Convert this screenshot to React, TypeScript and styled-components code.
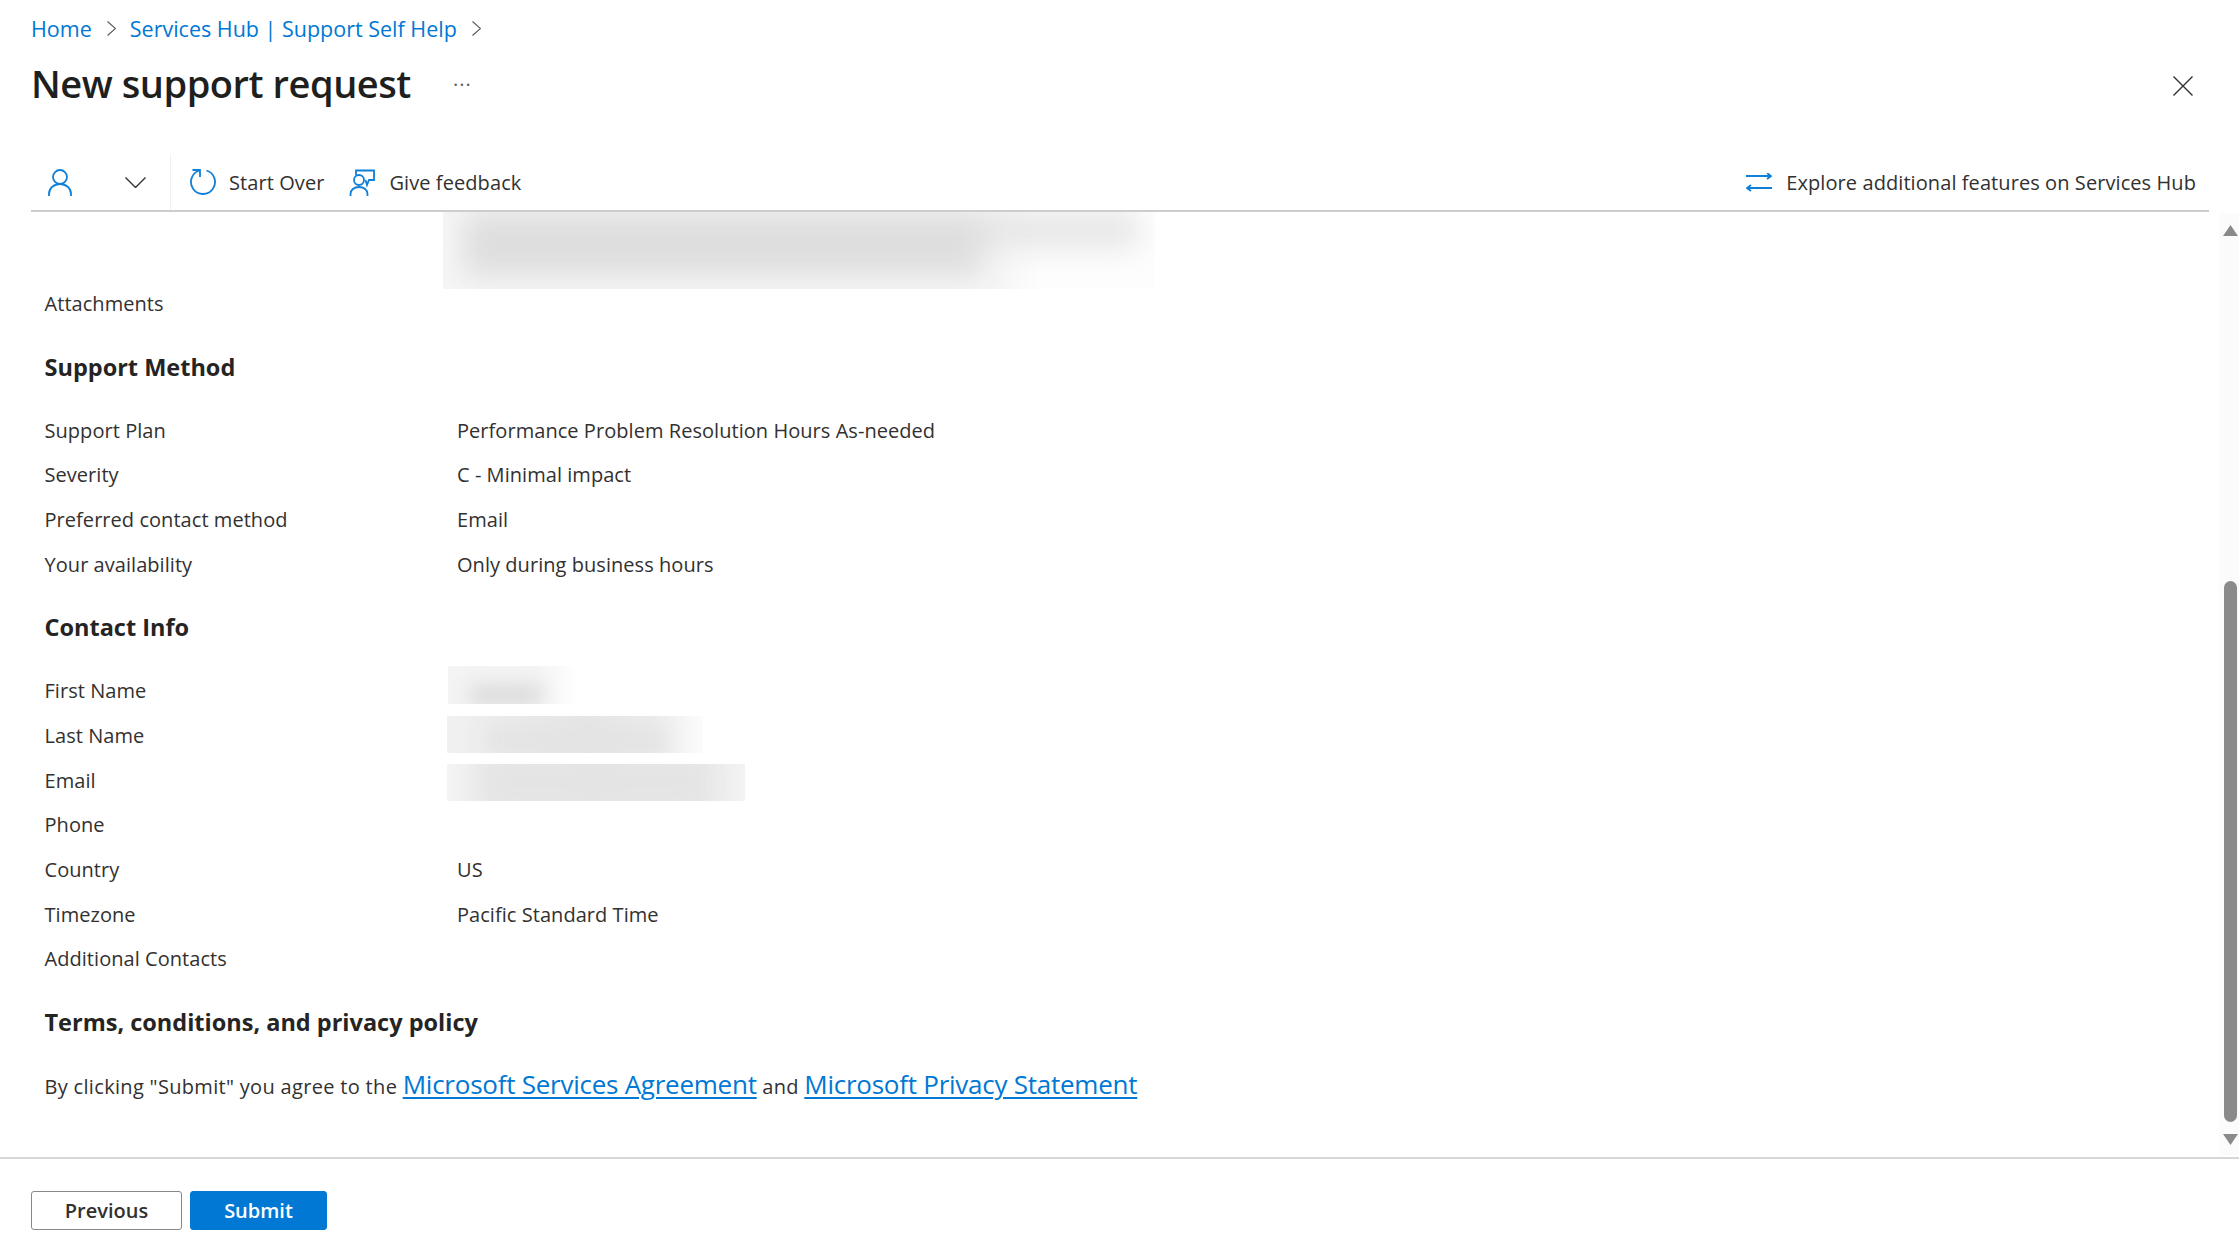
import React from "react";
import styled, { createGlobalStyle } from "styled-components";

const Global = createGlobalStyle`
  html, body { margin: 0; padding: 0; height: 100%; background: #fff; }
  body { font-family: "Open Sans", "Noto Sans", "Liberation Sans", sans-serif; color: #323130; overflow: hidden; }
  * { box-sizing: border-box; }
`;

const Page = styled.div`
  width: 2239px; height: 1240px; display: flex; flex-direction: column; overflow: hidden;
`;
const Breadcrumbs = styled.nav`
  display: flex; align-items: center; height: 46px; padding: 11px 0 0 31px; font-size: 21.5px;
`;
const Crumb = styled.a`
  color: #0078d4; text-decoration: none;
`;
const CrumbSep = styled.svg`
  width: 9px; height: 15px; margin: 0 14px 0 15px; fill: none; stroke: #605e5c; stroke-width: 1.2;
`;
const TitleRow = styled.div`
  display: flex; align-items: center; height: 44px; margin-top: 15px; padding: 0 46px 0 31px;
`;
const Title = styled.h1`
  margin: 0; font-size: 38px; font-weight: 600; color: #201f1e; letter-spacing: -0.45px; line-height: 44px;
`;
const More = styled.span`
  margin-left: 42px; font-size: 20px; line-height: 20px; color: #605e5c; letter-spacing: 1px; transform: translateY(2px);
`;
const Close = styled.svg`
  margin: 5px 0 0 auto; width: 20px; height: 20px; stroke: #323130; stroke-width: 1.4; fill: none;
`;
const Toolbar = styled.div`
  display: flex; align-items: center; height: 62px; margin: 45px 30px 0 31px; padding: 4px 13px 0 0;
  border-bottom: 2px solid #cdcdcd; font-size: 20px; letter-spacing: 0.08px;
`;
const UserGroup = styled.div`
  display: flex; align-items: center; width: 140px; height: 100%; padding-left: 17px; border-right: 1px solid #f1f1f1;
`;
const ToolIcon = styled.svg`
  flex: none; fill: none; stroke: #0f7fd8; stroke-width: 1.8;
`;
const Chevron = styled.svg`
  flex: none; margin-left: 53px; width: 21px; height: 11px; stroke: #323130; stroke-width: 1.4; fill: none;
`;
const ToolButton = styled.div<{ $gap: number; $left: number }>`
  display: flex; align-items: center; gap: ${(p) => p.$gap}px; margin-left: ${(p) => p.$left}px; white-space: nowrap;
`;
const Spring = styled.div`
  flex: 1;
`;
const Body = styled.div`
  flex: 1; min-height: 0; display: flex; overflow: hidden;
`;
const Content = styled.main`
  flex: 1; min-width: 0; padding: 0 0 0 44.5px; font-size: 20px; letter-spacing: 0.05px;
`;
const Redacted = styled.div<{ $w: number; $h: number; $left: number; $shift?: number; $base: string; $fill: string }>`
  position: relative; overflow: hidden; flex: none;
  width: ${(p) => p.$w}px; height: ${(p) => p.$h}px;
  margin-left: ${(p) => p.$left}px; margin-top: ${(p) => p.$shift ?? 0}px;
  background: ${(p) => p.$base};
  &::before {
    content: ""; position: absolute; inset: 0;
    background: ${(p) => p.$fill};
    filter: blur(10px);
  }
`;
const TopRedacted = styled(Redacted)`
  margin-bottom: -8px;
  &::before { filter: blur(14px); }
`;
const FieldRow = styled.div`
  display: grid; grid-template-columns: 412.500px 1fr; align-items: center; height: 44.7px; white-space: nowrap;
`;
const Section = styled.h2`
  margin: 0; height: 82px; display: flex; align-items: center; font-size: 23.5px; font-weight: 700; color: #252423; letter-spacing: 0;
`;
const Agreement = styled.p`
  margin: 0; display: flex; align-items: baseline; height: 44px; padding-top: 3px; white-space: pre; letter-spacing: 0.32px;
`;
const LegalLink = styled.a`
  color: #0078d4; text-decoration: underline; text-decoration-thickness: 2px; text-underline-offset: 3px; font-size: 26px; letter-spacing: -0.25px;
`;
const ScrollRail = styled.aside`
  position: relative; flex: none; width: 20px; margin: 1px 0 2px; background: #fbfbfb;
`;
const RailArrow = styled.svg<{ $top: number }>`
  position: absolute; left: 4px; top: ${(p) => p.$top}px; width: 15px; height: 11px; fill: #8a8a8a;
`;
const Thumb = styled.div`
  position: absolute; left: 5px; top: 368px; width: 13px; height: 541px; border-radius: 7px; background: #8a8a8a;
`;
const Footer = styled.footer`
  flex: none; height: 83px; border-top: 2px solid #d6d6d6; display: flex; gap: 8px; padding: 32px 0 0 31px;
`;
const Button = styled.button<{ $primary?: boolean }>`
  width: ${(p) => (p.$primary ? 137 : 151)}px; height: 39px; border-radius: 3px; padding: 0;
  font: 600 20px "Open Sans", sans-serif; letter-spacing: 0;
  background: ${(p) => (p.$primary ? "#0078d4" : "#fff")};
  color: ${(p) => (p.$primary ? "#fff" : "#323130")};
  border: ${(p) => (p.$primary ? "1px solid #0078d4" : "1.5px solid #8a8886")};
`;

const Field = ({ label, value, children }: { label: string; value?: string; children?: React.ReactNode }) => (
  <FieldRow>
    <span>{label}</span>
    {children ?? <span>{value}</span>}
  </FieldRow>
);

const bar = (x: number, y: number, w: number, h: number, c: string) =>
  `linear-gradient(${c}, ${c}) ${x}px ${y}px / ${w}px ${h}px no-repeat`;

export default function App() {
  return (
    <Page>
      <Global />
      <Breadcrumbs>
        <Crumb>Home</Crumb>
        <CrumbSep viewBox="0 0 9 15"><path d="M0.5 0.5l8 7-8 7" /></CrumbSep>
        <Crumb>Services Hub | Support Self Help</Crumb>
        <CrumbSep viewBox="0 0 9 15"><path d="M0.5 0.5l8 7-8 7" /></CrumbSep>
      </Breadcrumbs>
      <TitleRow>
        <Title>New support request</Title>
        <More>···</More>
        <Close viewBox="0 0 20 20"><path d="M0.5 0.5l19 19M19.5 0.5l-19 19" /></Close>
      </TitleRow>
      <Toolbar>
        <UserGroup>
          <ToolIcon width="24" height="27" viewBox="0 0 24 27">
            <circle cx="12" cy="8" r="7" />
            <path d="M1 27v-2c0-6 5-10 11-10s11 4 11 10v2" />
          </ToolIcon>
          <Chevron viewBox="0 0 21 11"><path d="M0.5 0.5L10.5 10.5 20.5 0.5" /></Chevron>
        </UserGroup>
        <ToolButton $gap={13} $left={19}>
          <ToolIcon width="26" height="28" viewBox="0 0 26 28">
            <path d="M9.500 2.500A12 12 0 1 0 16.500 2.500" />
            <path d="M2.500 2H10V9" />
          </ToolIcon>
          Start Over
        </ToolButton>
        <ToolButton $gap={14} $left={25}>
          <ToolIcon width="26" height="27" viewBox="0 0 26 27">
            <path d="M7 6V1.500H25V11H20L18 16 16.500 11" />
            <circle cx="10" cy="11" r="5" />
            <path d="M1.500 27v-2c0-4 3.500-7 8.500-7s8.500 3 8.500 7v2" />
          </ToolIcon>
          Give feedback
        </ToolButton>
        <Spring />
        <ToolButton $gap={14} $left={0}>
          <ToolIcon width="26" height="19" viewBox="0 0 26 19">
            <path d="M0 3H25M21 0l4 3-4 3M26 15H1M5 12l-4 3 4 3" />
          </ToolIcon>
          Explore additional features on Services Hub
        </ToolButton>
      </Toolbar>
      <Body>
        <Content>
          <TopRedacted
            $w={712}
            $h={77}
            $left={398.5}
            $base="linear-gradient(90deg, #f6f6f6 0%, #f6f6f6 78%, #fdfdfd 84%, #fdfdfd 100%)"
            $fill={`${bar(20, -16, 520, 80, "#dedede")}, ${bar(500, -16, 195, 52, "#e6e6e6")}`}
          />
          <FieldRow><span>Attachments</span></FieldRow>
          <Section>Support Method</Section>
          <Field label="Support Plan" value="Performance Problem Resolution Hours As-needed" />
          <Field label="Severity" value="C - Minimal impact" />
          <Field label="Preferred contact method" value="Email" />
          <Field label="Your availability" value="Only during business hours" />
          <Section>Contact Info</Section>
          <Field label="First Name">
            <Redacted
              $w={127}
              $h={38}
              $left={-9}
              $shift={-12}
              $base="linear-gradient(90deg, #f4f4f4 0%, #f4f4f4 70%, #fefefe 100%)"
              $fill={bar(22, 20, 72, 24, "#d6d6d6")}
            />
          </Field>
          <Field label="Last Name">
            <Redacted
              $w={256}
              $h={37}
              $left={-10}
              $shift={-1}
              $base="linear-gradient(90deg, #f1f1f1 0%, #e9e9e9 30%, #e5e5e5 55%, #ebebeb 80%, #fcfcfc 100%)"
              $fill={bar(40, 14, 180, 30, "#e3e3e3")}
            />
          </Field>
          <Field label="Email">
            <Redacted
              $w={298}
              $h={37}
              $left={-10}
              $shift={4}
              $base="linear-gradient(90deg, #f4f4f4 0%, #e8e8e8 15%, #e5e5e5 50%, #e8e8e8 85%, #f3f3f3 100%)"
              $fill={bar(40, 4, 220, 30, "#e4e4e4")}
            />
          </Field>
          <Field label="Phone" />
          <Field label="Country" value="US" />
          <Field label="Timezone" value="Pacific Standard Time" />
          <Field label="Additional Contacts" />
          <Section>Terms, conditions, and privacy policy</Section>
          <Agreement>By clicking "Submit" you agree to the <LegalLink>Microsoft Services Agreement</LegalLink> and <LegalLink>Microsoft Privacy Statement</LegalLink></Agreement>
        </Content>
        <ScrollRail>
          <RailArrow $top={12} viewBox="0 0 15 11"><path d="M7.500 0L15 11H0z" /></RailArrow>
          <Thumb />
          <RailArrow $top={921} viewBox="0 0 15 11"><path d="M0 0h15L7.500 11z" /></RailArrow>
        </ScrollRail>
      </Body>
      <Footer>
        <Button>Previous</Button>
        <Button $primary>Submit</Button>
      </Footer>
    </Page>
  );
}
